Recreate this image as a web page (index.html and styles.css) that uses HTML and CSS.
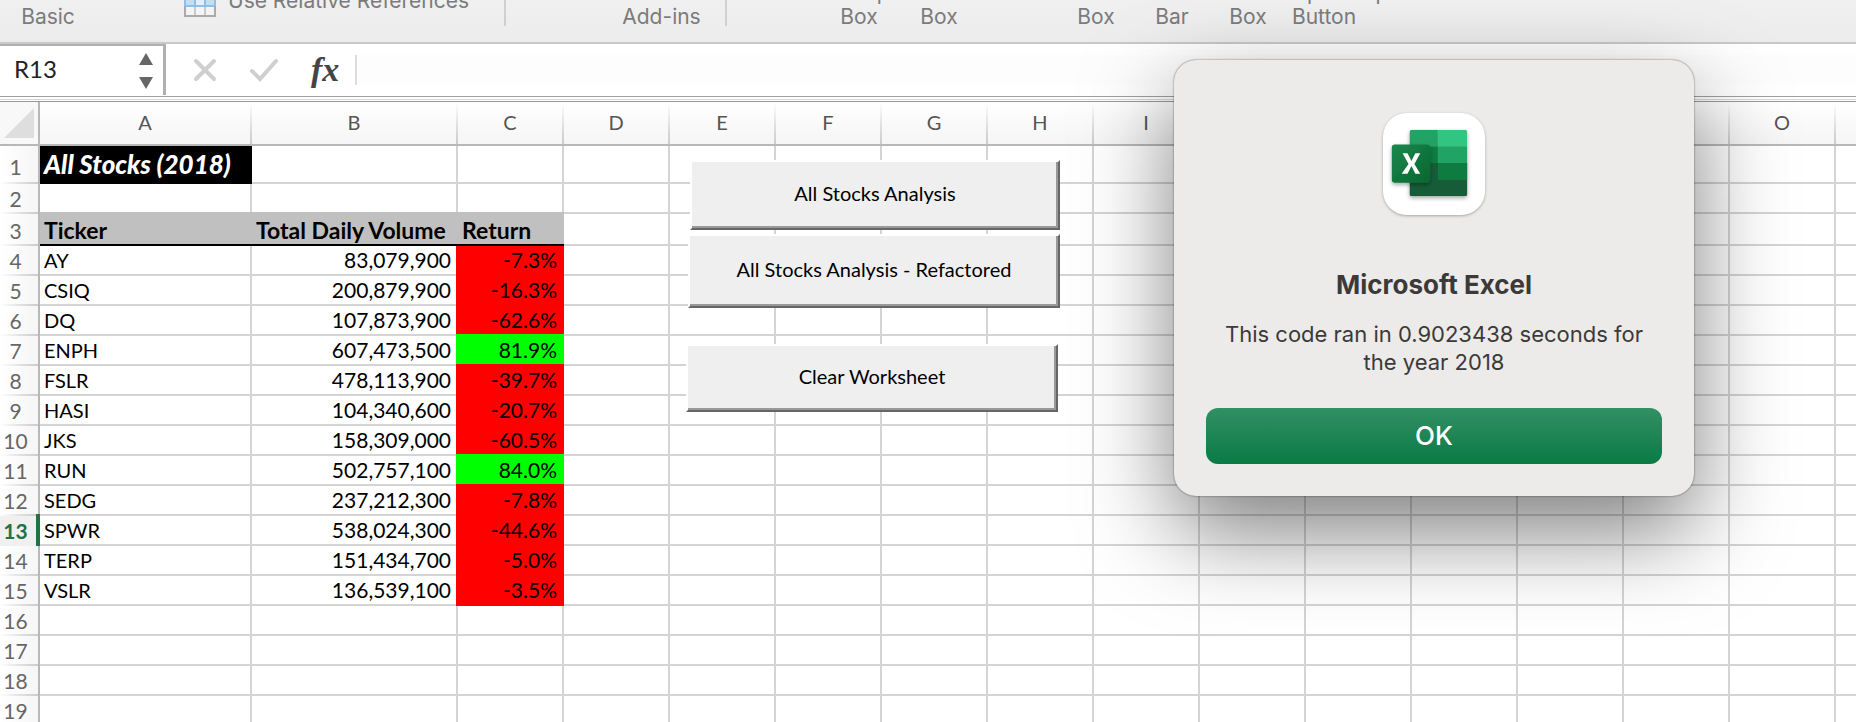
FILE: index.html
```html
<!DOCTYPE html>
<html lang="en">
<head>
<meta charset="utf-8">
<title>All Stocks Analysis</title>
<link rel="stylesheet" href="styles.css">
</head>
<body>
<header class="ribbon">
  <span class="tool tool-basic">Basic</span>
  <div class="relative-refs">
    <svg width="32" height="17" viewBox="0 0 32 17" aria-hidden="true">
      <rect x="1" y="-6" width="30" height="22" fill="#f4f4f4"/>
      <path d="M1 0h10v6H1zM21 0h10v6H21z" fill="#c5dff2"/>
      <path d="M11 0h10v6H11z" fill="#e4eef6"/>
      <path d="M11 0v16M21 0v16" stroke="#bbb" stroke-width="1.5"/>
      <path d="M0 6h32" stroke="#8fbfe6" stroke-width="2"/>
      <path d="M1 6v10h30V6" fill="none" stroke="#aaa" stroke-width="2"/>
      <path d="M1 0v6M31 0v6M11 0v6M21 0v6" stroke="#8fbfe6" stroke-width="2"/>
    </svg>
    <span>Use Relative References</span>
  </div>
  <span class="divider"></span>
  <span class="tool tool-addins">Add-ins</span>
  <span class="divider"></span>
  <div class="controls">
    <span class="tool tool-wide">Group<br>Box</span>
    <span class="tool tool-wide">Box</span>
    <span class="tool tool-gap">Box</span>
    <span class="tool">Bar</span>
    <span class="tool">Box</span>
    <span class="tool">Option<br>Button</span>
    <span class="tool tool-top">Spinner</span>
  </div>
</header>

<section class="formula-bar">
  <div class="name-box">
    <input class="name-input" type="text" value="R13" aria-label="Name box">
    <svg width="14" height="36" viewBox="0 0 14 36" aria-hidden="true">
      <path d="M7 0l7 12H0zM0 24h14l-7 12z" fill="#666"/>
    </svg>
  </div>
  <button class="bar-button" type="button" aria-label="Cancel">
    <svg width="24" height="24" viewBox="0 0 24 24"><path d="M3 3l18 18M21 3L3 21" stroke="#cfcfcf" stroke-width="4" stroke-linecap="round"/></svg>
  </button>
  <button class="bar-button" type="button" aria-label="Enter">
    <svg width="30" height="24" viewBox="0 0 30 24"><path d="M3 13l8 8L27 3" fill="none" stroke="#cfcfcf" stroke-width="4" stroke-linecap="round"/></svg>
  </button>
  <button class="bar-button fx" type="button">fx</button>
  <input class="formula-input" type="text" aria-label="Formula">
</section>

<main class="sheet">
  <table class="grid">
    <colgroup id="cols"></colgroup>
    <thead><tr id="letters"></tr></thead>
    <tbody id="rows"></tbody>
  </table>
  <button class="macro macro-analysis" type="button">All Stocks Analysis</button>
  <button class="macro macro-refactored" type="button">All Stocks Analysis - Refactored</button>
  <button class="macro macro-clear" type="button">Clear Worksheet</button>
</main>

<div class="dialog" role="alertdialog" aria-labelledby="dialog-title" aria-describedby="dialog-text">
  <svg class="app-icon" width="102" height="102" viewBox="0 0 104 104" aria-hidden="true">
    <defs>
      <linearGradient id="tile" x1="0" y1="0" x2="1" y2="1"><stop offset="0" stop-color="#18884f"/><stop offset="1" stop-color="#0a662e"/></linearGradient>
      <clipPath id="book"><rect x="27" y="17" width="59" height="68" rx="3"/></clipPath>
      <filter id="soft" x="-20%" y="-20%" width="140%" height="150%"><feDropShadow dx="0" dy="2" stdDeviation="2" flood-opacity=".35"/></filter>
    </defs>
    <rect width="104" height="104" rx="24" fill="#fff"/>
    <g filter="url(#soft)">
      <g clip-path="url(#book)">
        <path d="M27 17h29v17H27z" fill="#21a366"/>
        <path d="M56 17h30v17H56z" fill="#33c481"/>
        <path d="M27 34h29v17H27z" fill="#107c41"/>
        <path d="M56 34h30v17H56z" fill="#21a366"/>
        <path d="M27 51h59v34H27z" fill="#185c37"/>
        <path d="M56 51h30v17H56z" fill="#107c41"/>
      </g>
    </g>
    <rect x="9" y="32" width="39" height="39" rx="3" fill="url(#tile)" filter="url(#soft)"/>
    <path d="M20 41h5l4 8 4-8h5l-6 11 6 10h-5l-4-8-4 8h-6l7-10z" fill="#fff"/>
  </svg>
  <h1 class="dialog-title" id="dialog-title">Microsoft Excel</h1>
  <p class="dialog-text" id="dialog-text">This code ran in 0.9023438 seconds for the year 2018</p>
  <button class="dialog-ok" type="button">OK</button>
</div>
<script src="sheet.js"></script>
</body>
</html>
```
FILE: styles.css
```css
* { box-sizing: border-box; }

body {
  margin: 0;
  height: 100vh;
  overflow: hidden;
  display: flex;
  flex-direction: column;
  position: relative;
  background: #fff;
  font-family: Lato, "Open Sans", sans-serif;
  color: #000;
}

button, input { font: inherit; color: inherit; }

/* Ribbon */
.ribbon {
  flex: none;
  display: flex;
  align-items: flex-start;
  height: 44px;
  overflow: hidden;
  background: linear-gradient(#f0f0f0, #ececec);
  border-bottom: 2px solid #c8c8c8;
  font-family: Inter, sans-serif;
  font-size: 21px;
  line-height: 24px;
  color: #7b7b7b;
  white-space: nowrap;
}
.tool {
  display: flex;
  flex-direction: column;
  align-items: center;
  justify-content: flex-end;
  height: 48px;
  margin-top: -19px;
  text-align: center;
}
.tool-basic { width: 96px; }
.relative-refs {
  display: flex;
  align-items: flex-start;
  gap: 12px;
  margin-left: 88px;
  width: 320px;
}
.relative-refs span { margin-top: -11px; }
.divider { width: 2px; height: 26px; background: #d0d0d0; }
.tool-addins { width: 219px; padding-left: 92px; }
.controls { display: flex; margin-left: 92px; }
.controls .tool { display: block; padding-top: 24px; width: 76px; }
.controls .tool-wide { width: 80px; }
.controls .tool:has(br) { padding-top: 0; }
.controls .tool-gap { margin-left: 79px; }
.controls .tool-top { padding-top: 0; }

/* Formula bar */
.formula-bar {
  flex: none;
  display: flex;
  align-items: center;
  height: 58px;
  padding-bottom: 6px;
  background: linear-gradient(#a0a0a0, #a0a0a0) 0 52px / 100% 1px no-repeat,
    linear-gradient(#d8d8d8, #d8d8d8) 0 55px / 100% 1px no-repeat,
    linear-gradient(#989898, #989898) 0 57px / 100% 1px no-repeat, #fff;
}
.name-box {
  align-self: flex-start;
  display: flex;
  align-items: center;
  justify-content: space-between;
  width: 166px;
  height: 51px;
  padding: 0 10px 0 14px;
  border: solid #b0b0b0;
  border-width: 2px 3px 0 0;
}
.name-input {
  width: 110px;
  padding: 0 0 4px;
  border: 0;
  outline: 0;
  background: none;
  font-size: 24px;
  color: #222;
}
.bar-button {
  display: flex;
  padding: 0;
  margin-left: 27px;
  border: 0;
  background: none;
}
.bar-button + .bar-button { margin-left: 32px; }
.fx {
  font-family: "Liberation Serif", serif;
  font-style: italic;
  font-weight: bold;
  font-size: 34px;
  line-height: 36px;
  color: #444;
}
.formula-input {
  flex: 1;
  height: 30px;
  margin-left: 16px;
  padding: 0 14px;
  border: 0;
  border-left: 2px solid #ddd;
  outline: 0;
  background: #fdfdfd;
}

/* Worksheet */
.sheet { position: relative; flex: 1; overflow: hidden; }
.grid {
  table-layout: fixed;
  width: 1942px;
  border-collapse: separate;
  border-spacing: 0;
  font-size: 20px;
  line-height: 28px;
}
.col-head { width: 40px; }
.col-a { width: 212px; }
.col-b { width: 206px; }
.col-n { width: 106px; }

.grid th, .grid td { padding: 0 4px; height: 30px; white-space: nowrap; }
.grid thead th {
  height: 44px;
  padding: 0 6px 2px 4px;
  border-bottom: 2px solid #b8b8b8;
  background: linear-gradient(#fff0, #ccc) right / 2px 100% no-repeat, linear-gradient(#fff, #f5f5f5);
  font-weight: 400;
  color: #555;
}
.grid thead th.corner { border-right: 2px solid #b8b8b8; padding: 0; background: #f8f8f8; }
.corner svg { display: block; margin: 0 0 0 4px; }
.grid tbody th {
  padding: 0 7px 0 0;
  border-right: 2px solid #b8b8b8;
  background: linear-gradient(to right, #fff0, #ccc) bottom / 100% 2px no-repeat, linear-gradient(to right, #fff, #f6f6f6);
  font-weight: 400;
  font-size: 21px;
  color: #666;
}
.grid tbody th.current {
  position: relative;
  color: #217346;
  background: #f0f0f0;
  font-weight: 700;
}
.current::after {
  content: "";
  position: absolute;
  top: -2px;
  right: -2px;
  bottom: 0;
  width: 4px;
  background: #217346;
}
.grid td { border: solid #d4d4d4; border-width: 0 2px 2px 0; }
.grid .row-1 > * { height: 38px; }
.grid .row-1 > th { padding-top: 4px; }
.grid .row-3 > * { height: 32px; padding-top: 2px; }
.grid .title {
  background: #000;
  border-color: #000;
  color: #fff;
  font-size: 26px;
  font-weight: 900;
  font-style: italic;
}
.grid .heading {
  background: #c0c0c0;
  border-right: 0;
  border-bottom-color: #000;
  box-shadow: 0 -2px #c0c0c0;
  font-size: 23px;
  font-weight: 700;
}
.grid .number { padding-right: 5px; text-align: right; font-size: 21px; }
.grid .loss { background: #f00; border-color: #f00; box-shadow: -2px 0 #f00, 0 -2px #f00, -2px -2px #f00; }
.grid .gain { background: #0f0; border-color: #0f0; box-shadow: -2px 0 #0f0, 0 -2px #0f0, -2px -2px #0f0; }
.grid .row-4 .loss { box-shadow: -2px 0 #f00; }

.macro {
  position: absolute;
  padding: 0 6px 4px;
  border: 2px solid;
  border-color: #fff #666 #666 #fff;
  box-shadow: inset -2px -2px #999;
  background: #efefef;
  font-size: 20px;
}
.macro-analysis { left: 690px; top: 58px; width: 370px; height: 70px; }
.macro-refactored { left: 688px; top: 132px; width: 372px; height: 74px; }
.macro-clear { left: 686px; top: 242px; width: 372px; height: 68px; }

/* Message box */
.dialog {
  position: absolute;
  left: 1174px;
  top: 60px;
  width: 520px;
  display: flex;
  flex-direction: column;
  align-items: center;
  padding: 53px 32px 32px;
  border-radius: 22px;
  background: #ecebe9;
  box-shadow: 0 0 2px rgba(0, 0, 0, .6), 0 36px 90px rgba(0, 0, 0, .5);
  font-family: Inter, sans-serif;
  color: #3b3a38;
  text-align: center;
}
.app-icon { border-radius: 24px; box-shadow: 0 1px 3px rgba(0, 0, 0, .3); }
.dialog-title { margin: 54px 0 19px; font-size: 26px; line-height: 32px; font-weight: 700; }
.dialog-text { margin: 0; width: 440px; font-size: 22px; line-height: 28px; }
.dialog-ok {
  width: 100%;
  height: 56px;
  margin-top: 32px;
  padding: 0 6px 2px;
  border: 0;
  border-radius: 12px;
  background: linear-gradient(#319064, #0a7a45);
  color: #fff;
  font-size: 26px;
  font-weight: 500;
}
```
FILE: sheet.js
```js
const stocks = [
  ["AY", "83,079,900", "-7.3%"],
  ["CSIQ", "200,879,900", "-16.3%"],
  ["DQ", "107,873,900", "-62.6%"],
  ["ENPH", "607,473,500", "81.9%"],
  ["FSLR", "478,113,900", "-39.7%"],
  ["HASI", "104,340,600", "-20.7%"],
  ["JKS", "158,309,000", "-60.5%"],
  ["RUN", "502,757,100", "84.0%"],
  ["SEDG", "237,212,300", "-7.8%"],
  ["SPWR", "538,024,300", "-44.6%"],
  ["TERP", "151,434,700", "-5.0%"],
  ["VSLR", "136,539,100", "-3.5%"],
];
const letters = [..."ABCDEFGHIJKLMNOP"];
const currentRow = 13;

function cells(row) {
  if (row === 1) return [["All Stocks (2018)", "title"]];
  if (row === 3) return ["Ticker", "Total Daily Volume", "Return"].map(t => [t, "heading"]);
  const stock = stocks[row - 4];
  if (!stock) return [];
  const tone = stock[2].startsWith("-") ? "loss" : "gain";
  return [[stock[0], ""], [stock[1], "number"], [stock[2], "number " + tone]];
}

document.getElementById("cols").innerHTML =
  '<col class="col-head"><col class="col-a"><col class="col-b">' + '<col class="col-n">'.repeat(letters.length - 2);

document.getElementById("letters").innerHTML =
  '<th class="corner" aria-label="Select all"><svg width="30" height="30" viewBox="0 0 30 30"><path d="M30 0v30H0z" fill="#dedede"/></svg></th>' +
  letters.map(l => `<th scope="col">${l}</th>`).join("");

let html = "";
for (let row = 1; row <= 19; row++) {
  const filled = cells(row);
  html += `<tr class="row-${row}"><th scope="row"${row === currentRow ? ' class="current"' : ""}>${row}</th>`;
  html += letters.map((_, i) => {
    const [text, cls] = filled[i] || ["", ""];
    return `<td class="${cls}">${text}</td>`;
  }).join("");
  html += "</tr>";
}
document.getElementById("rows").innerHTML = html;
```
